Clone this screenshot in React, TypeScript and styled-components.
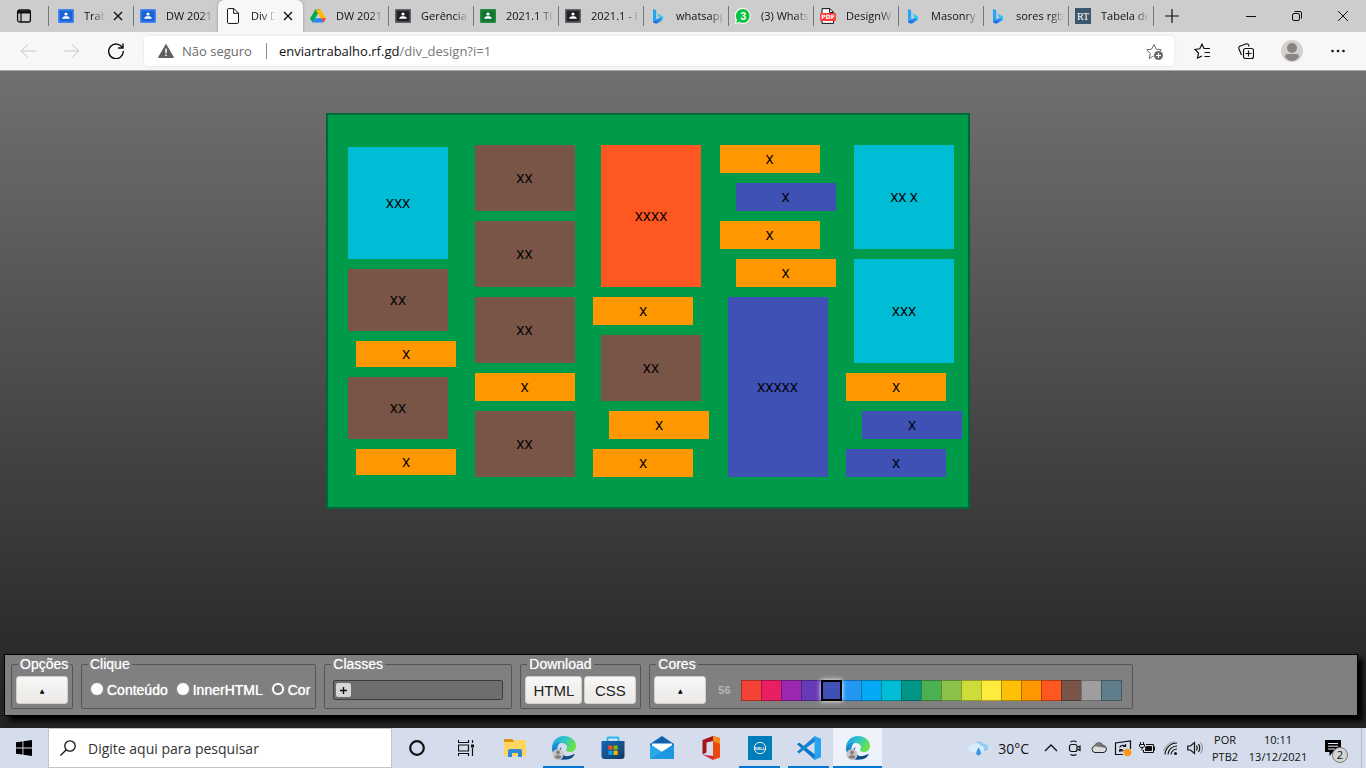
import React, { ReactNode } from 'react';
import styled, { createGlobalStyle, css } from 'styled-components';

const ui = '"Open Sans", "Noto Sans", sans-serif';
const arial = '"Liberation Sans", Arial, sans-serif';

const GlobalStyle = createGlobalStyle`
  *, *::before, *::after { box-sizing: border-box; }
  body { margin: 0; font-family: ${ui}; font-size: 12px; color: #111; }
  button { font: inherit; color: inherit; padding: 0; margin: 0; border: 0; background: none; }
  svg { display: block; flex: none; }
`;

const Screen = styled.div`
  display: flex;
  flex-direction: column;
  min-height: 100vh;
`;

/* ---------- browser window ---------- */

const TabStrip = styled.header`
  display: flex;
  height: 32px;
  background: #cdcdcd;
`;

const TabActions = styled.button`
  display: flex;
  align-items: center;
  justify-content: center;
  width: 48px;
  height: 32px;
`;

const Tabs = styled.nav`
  display: flex;
  min-width: 0;
`;

const Tab = styled.div<{ $active?: boolean; $line?: boolean; $first?: boolean }>`
  position: relative;
  display: flex;
  align-items: center;
  width: 85px;
  min-width: 0;
  height: 32px;
  padding: 0 4px 0 ${(p) => (p.$first ? 10 : 7)}px;
  ${(p) =>
    p.$active &&
    css`
      background: #f7f7f7;
      border-radius: 6px 6px 0 0;
      box-shadow: 0 0 3px rgba(0, 0, 0, 0.3);
      clip-path: inset(0 -3px 0 -3px);
    `}
  ${(p) =>
    p.$line &&
    css`
      &::before {
        content: '';
        position: absolute;
        left: 0;
        top: 6px;
        height: 20px;
        border-left: 1px solid #767676;
      }
    `}
`;

const TabTitle = styled.a`
  flex: 1;
  min-width: 0;
  margin-left: 10px;
  overflow: hidden;
  white-space: nowrap;
  color: #111;
  text-decoration: none;
  font-size: 11px;
  line-height: 16px;
  mask-image: linear-gradient(to left, transparent 0, #000 14px);
`;

const TabClose = styled.button`
  display: flex;
  align-items: center;
  justify-content: center;
  width: 16px;
  height: 16px;
  margin: 0 3px 0 4px;
`;

const NewTab = styled.button`
  position: relative;
  display: flex;
  align-items: center;
  justify-content: center;
  width: 38px;
  height: 32px;
  &::before {
    content: '';
    position: absolute;
    left: 0;
    top: 6px;
    height: 20px;
    border-left: 1px solid #767676;
  }
`;

const WindowButtons = styled.div`
  display: flex;
  margin-left: auto;
`;

const WindowButton = styled.button`
  display: flex;
  align-items: center;
  justify-content: center;
  width: 46px;
  height: 32px;
`;

const Toolbar = styled.div`
  display: flex;
  align-items: center;
  height: 39px;
  padding: 0 6px;
  background: #f7f7f7;
  border-bottom: 1px solid #a8a8a8;
`;

const ToolButton = styled.button<{ $wide?: boolean }>`
  display: flex;
  align-items: center;
  justify-content: center;
  width: ${(p) => (p.$wide ? 48 : 44)}px;
  height: 32px;
`;

const AddressBar = styled.form`
  display: flex;
  align-items: center;
  flex: 1;
  height: 30px;
  margin: 0 6px;
  padding: 0 11px 0 14px;
  background: #fff;
  border-radius: 4px;
  box-shadow: 0 0 3px rgba(0, 0, 0, 0.1);
  font-size: 13px;
`;

const SecurityNote = styled.button`
  display: flex;
  align-items: center;
  gap: 8px;
  padding-right: 14px;
  color: #6b6b6b;
  line-height: 16px;
  border-right: 1px solid #8a8a8a;
  white-space: nowrap;
`;

const Address = styled.a`
  flex: 1;
  margin-left: 12px;
  color: #777;
  text-decoration: none;
  white-space: nowrap;
`;

const Host = styled.span`
  color: #111;
`;

/* ---------- page ---------- */

const Page = styled.main`
  display: flex;
  flex-direction: column;
  flex: 1;
  background: linear-gradient(#707070, #222);
`;

const Stage = styled.section`
  display: flex;
  flex: 1;
  justify-content: center;
  align-items: flex-start;
  padding: 42px 70px 24px 0;
`;

const Board = styled.div`
  display: flex;
  align-items: center;
  justify-content: space-between;
  width: 644px;
  padding: 30px 6px 30px 12px;
  background: #009a4b;
  border: 2px solid #006837;
`;

const Column = styled.div`
  display: flex;
  flex-direction: column;
  gap: 10px;
  width: 116px;
`;

type Side = 'start' | 'center' | 'end';

const Block = styled.div<{ $h: number; $color: string; $side: Side }>`
  display: flex;
  align-items: center;
  justify-content: center;
  align-self: ${(p) => (p.$side === 'center' ? 'center' : `flex-${p.$side}`)};
  width: 100px;
  height: ${(p) => p.$h}px;
  background: ${(p) => p.$color};
  color: #000;
  font: 13px Roboto, sans-serif;
`;

const Panel = styled.section`
  display: flex;
  gap: 8px;
  margin: 0 8px 12px 4px;
  padding: 0 6px 6px;
  background: #808080;
  border: 1px solid #000;
  box-shadow: 5px 5px 5px #000;
  font-family: ${arial};
  font-size: 14px;
  color: #fff;
`;

const Group = styled.fieldset<{ $left?: number; $right?: number }>`
  min-width: 0;
  height: 53px;
  margin: 1px 0 0;
  padding: 0 ${(p) => p.$right ?? 4}px 0 ${(p) => p.$left ?? 4}px;
  border: 1px solid #555;
  border-radius: 2px;
`;

const Legend = styled.legend<{ $indent?: number }>`
  margin: 0 -4px 0 ${(p) => p.$indent ?? 2}px;
  padding: 0 2px;
  line-height: 16px;
  background: #808080;
  border-radius: 8px;
  text-shadow: 0 0 1px rgba(255, 255, 255, 0.6);
`;

const GroupRow = styled.div<{ $gap?: number }>`
  display: flex;
  align-items: center;
  gap: ${(p) => p.$gap ?? 2}px;
  height: 28px;
  margin-top: 4px;
`;

const Push = styled.button<{ $w: number; $small?: boolean }>`
  width: ${(p) => p.$w}px;
  height: 28px;
  background: linear-gradient(#f8f7f6, #ebe9e7);
  border: 1px solid #d3cfca;
  border-radius: 3px;
  color: ${(p) => (p.$small ? '#000' : '#222')};
  font-size: ${(p) => (p.$small ? 6 : 15)}px;
  font-family: ${(p) => (p.$small ? '"DejaVu Sans", sans-serif' : arial)};
`;

const Choice = styled.label`
  display: flex;
  align-items: center;
  gap: 4px;
  text-shadow: 0 0 1px #fff;
`;

const Radio = styled.input`
  appearance: none;
  width: 12px;
  height: 12px;
  margin: 0 0 2px;
  border-radius: 50%;
  background: #fff;
  box-shadow: 0 0 2px #aaa;
  &:checked {
    background: #777;
    border: 2px solid #fff;
  }
`;

const ClassList = styled.div`
  display: flex;
  align-items: center;
  width: 170px;
  height: 20px;
  padding: 0 2px;
  background: #6e6e6e;
  border: 1px solid #3c3c3c;
  border-radius: 2px;
`;

const AddClass = styled.button`
  display: flex;
  align-items: center;
  justify-content: center;
  width: 15px;
  height: 14px;
  background: #d6d6d6;
  border-radius: 2px;
`;

const Count = styled.output`
  width: 23px;
  margin-left: 12px;
  font-size: 11px;
  font-weight: bold;
  color: #b5b5b5;
`;

const Palette = styled.div`
  display: flex;
  padding-right: 7px;
`;

const Swatch = styled.button<{ $color: string; $on: boolean }>`
  width: 21px;
  height: 21px;
  margin-right: -1px;
  background: ${(p) => p.$color};
  border: 1px solid rgba(0, 0, 0, 0.3);
  ${(p) =>
    p.$on &&
    css`
      position: relative;
      border: 2px solid #000;
      box-shadow: 0 0 5px #fff;
    `}
`;

/* ---------- taskbar ---------- */

const Taskbar = styled.footer`
  display: flex;
  height: 40px;
  background: #d5dceb;
`;

const StartButton = styled.button`
  display: flex;
  align-items: center;
  justify-content: center;
  width: 48px;
`;

const SearchBox = styled.label`
  display: flex;
  align-items: center;
  gap: 12px;
  width: 344px;
  padding-left: 11px;
  background: #fff;
  border: 1px solid #c4c4c4;
`;

const SearchInput = styled.input`
  flex: 1;
  min-width: 0;
  padding: 0;
  border: 0;
  outline: 0;
  font: 14px ${ui};
  &::placeholder {
    color: #333;
    opacity: 1;
  }
`;

const TaskButton = styled.button<{ $open?: boolean; $current?: boolean }>`
  position: relative;
  display: flex;
  align-items: center;
  justify-content: center;
  width: 49px;
  background: ${(p) => (p.$current ? '#edf1f9' : 'none')};
  &::after {
    content: '';
    position: absolute;
    bottom: 0;
    left: ${(p) => (p.$current ? 0 : 4)}px;
    right: ${(p) => (p.$current ? 0 : 4)}px;
    height: 2px;
    background: ${(p) => (p.$open || p.$current ? '#0078d7' : 'none')};
  }
`;

const Tray = styled.div`
  display: flex;
  align-items: center;
  margin-left: auto;
  padding-right: 4px;
`;

const Weather = styled.button`
  display: flex;
  align-items: center;
  gap: 10px;
  margin-right: 10px;
  font-size: 14px;
`;

const TrayButton = styled.button`
  display: flex;
  align-items: center;
  justify-content: center;
  width: 24px;
  height: 40px;
`;

const TrayText = styled.button<{ $w: number }>`
  width: ${(p) => p.$w}px;
  font-size: 11px;
  line-height: 17px;
  text-align: center;
`;

const Notices = styled.button`
  position: relative;
  width: 49px;
  height: 40px;
  padding-left: 12px;
  border-right: 1px solid #b4bac8;
`;

const Badge = styled.span`
  position: absolute;
  left: 19px;
  top: 19px;
  width: 16px;
  height: 16px;
  border: 1px solid #777;
  border-radius: 50%;
  background: #d4d4d4;
  font-size: 11px;
  line-height: 14px;
`;

/* ---------- icons ---------- */

const Classroom = ({ frame, fill }: { frame: string; fill: string }) => (
  <svg width="16" height="16" viewBox="0 0 16 16">
    <rect y="1" width="16" height="14" rx="1" fill={frame} />
    <rect x="1.6" y="2.6" width="12.8" height="10.8" fill={fill} />
    <circle cx="8" cy="6" r="1.6" fill="#fff" />
    <path d="M4.200 10.800c0-2 2-2.600 3.800-2.600s3.800.6 3.800 2.600z" fill="#fff" />
  </svg>
);

const DocIcon = () => (
  <svg width="16" height="16" viewBox="0 0 16 16" fill="#fff" stroke="#111">
    <path d="M3.5.6H9l4.500 4.500v9.300q0 1-1 1H3.500q-1 0-1-1V1.600q0-1 1-1z" />
    <path d="M8.600.8v4.500h4.700" fill="none" />
  </svg>
);

const DriveIcon = () => (
  <svg width="16" height="16" viewBox="0 0 16 16">
    <path d="M5.400 1.500h5L8 5.600z" fill="#188038" />
    <path d="M5.400 1.500 0 10.500l2.500 4L8 5.600z" fill="#00ac47" />
    <path d="M10.500 1.500H5.600L10.800 10.500H16z" fill="#ffba00" />
    <path d="M2.500 14.500 5 10.300h6l2.500 4.200z" fill="#2684fc" />
    <path d="M10.900 10.300H16l-2.500 4.200z" fill="#ea4335" />
  </svg>
);

const BingIcon = () => (
  <svg width="16" height="16" viewBox="0 0 16 16">
    <defs>
      <linearGradient id="bingBody" x1="0" y1="1" x2="1" y2="0">
        <stop offset="0" stopColor="#1b54e8" />
        <stop offset="1" stopColor="#2fc2f4" />
      </linearGradient>
    </defs>
    <path d="M3 1l3.200 1.200v9.300L3 14z" fill="#24a5f5" />
    <path d="M3 13.500 12.500 8q1.500 3-1 4.800L7 15.500q-3.500 0-4-2z" fill="url(#bingBody)" />
    <path d="M7.300 5.600 11 7.300q2.300 1 2 3.500l-4-1.400z" fill="#35c6f5" />
  </svg>
);

const WhatsIcon = () => (
  <svg width="16" height="16" viewBox="0 0 16 16">
    <path d="M0 16 .8 12A8 8 0 1 1 4 15z" fill="#fff" />
    <path d="M1.300 14.700 2 11.800a6.900 6.900 0 1 1 2.400 2.200z" fill="#0cc143" />
    <text x="8.200" y="12" fontSize="10" fontWeight="700" textAnchor="middle" fill="#fff" fontFamily="Liberation Sans, sans-serif">3</text>
  </svg>
);

const PdfIcon = () => (
  <svg width="16" height="16" viewBox="0 0 16 16">
    <path d="M2 .6h8l3.500 3.600v11.200H2z" fill="#fff" stroke="#111" />
    <path d="M9.600.8v3.700h3.600" fill="none" stroke="#111" />
    <rect y="5" width="16" height="8" rx="1" fill="#ff3b3b" />
    <text x="8" y="11.200" fontSize="6" fontWeight="700" textAnchor="middle" fill="#fff" fontFamily="DejaVu Sans, sans-serif">PDF</text>
  </svg>
);

const RtIcon = () => (
  <svg width="16" height="16" viewBox="0 0 16 16">
    <rect width="16" height="16" fill="#3d566e" />
    <text x="8" y="12" fontSize="10" textAnchor="middle" fill="#fff" fontFamily="Liberation Serif, serif">RT</text>
  </svg>
);

const Line = ({ size = 16, w = 1, color = '#111', children }: { size?: number; w?: number; color?: string; children: ReactNode }) => (
  <svg width={size} height={size} viewBox={`0 0 ${size} ${size}`} fill="none" stroke={color} strokeWidth={w}>
    {children}
  </svg>
);

const EdgeIcon = ({ id }: { id: string }) => (
  <svg width="26" height="26" viewBox="0 0 26 26">
    <defs>
      <linearGradient id={`${id}a`} x1="0" y1="0" x2="1" y2=".4">
        <stop offset="0" stopColor="#1f9fe0" />
        <stop offset=".5" stopColor="#2ec4d0" />
        <stop offset="1" stopColor="#6be34a" />
      </linearGradient>
      <linearGradient id={`${id}b`} x1="0" y1="0" x2="0" y2="1">
        <stop offset="0" stopColor="#1b9de2" />
        <stop offset="1" stopColor="#0b57a8" />
      </linearGradient>
    </defs>
    <path d="M1 13C1 6 6 1 13 1s12 4.500 12 10c0 4-3 6-6 6-2.500 0-4-1-4-2s1-1.300 1-3c0-2-2.500-4-6-4-4 0-8 2-9 5z" fill={`url(#${id}a)`} />
    <path d="M1 13c.5-4 4.500-6 9-5.500C7 9 6 12 6.500 15c.7 4.500 4.500 8 9.500 8.500-2 1.200-3.500 1.500-5 1.300C5 24 1 19 1 13z" fill={`url(#${id}b)`} />
    <path d="M10.500 12c-2.500 5 1.500 10 7 9 3-.4 4.500-1.700 5.500-2 .6 0 .8.500.3 1.200C20 25 14 26 10 22.500c-3-3-3-8 .5-10.500z" fill="#114a8b" />
    <circle cx="7" cy="19.500" r="5.500" fill="#c9c7c5" />
    <circle cx="7" cy="17.600" r="2" fill="#85807d" />
    <path d="M3.500 22.500c0-3.400 7-3.400 7 0q-3.500 2.500-7 0z" fill="#85807d" />
  </svg>
);

const FolderIcon = () => (
  <svg width="22" height="20" viewBox="0 0 22 20">
    <path d="M0 1h8l2 2v5H0z" fill="#d9960a" />
    <path d="M0 4h9l2-2h11v16H0z" fill="#ffd562" />
    <path d="M4 19v-6q0-2 2-2h10q2 0 2 2v6h-4v-4H8v4z" fill="#2f8ad8" />
  </svg>
);

const StoreIcon = () => (
  <svg width="24" height="24" viewBox="0 0 24 24">
    <defs>
      <linearGradient id="store" x1="0" y1="0" x2="1" y2="1">
        <stop offset="0" stopColor="#1268b8" />
        <stop offset="1" stopColor="#173a63" />
      </linearGradient>
    </defs>
    <path d="M6.500 7V2.500q0-1 1-1h9q1 0 1 1V7" fill="none" stroke="#27b8ee" strokeWidth="1.800" />
    <path d="M.5 5h23v15q0 3-3 3h-17q-3 0-3-3z" fill="url(#store)" />
    <path d="M7.300 9.500h4.200v4.200H7.300z" fill="#f25022" />
    <path d="M12.500 9.500h4.200v4.200h-4.200z" fill="#7fba00" />
    <path d="M7.300 14.700h4.200v4.200H7.300z" fill="#00a4ef" />
    <path d="M12.500 14.700h4.200v4.200h-4.200z" fill="#ffb900" />
  </svg>
);

const MailIcon = () => (
  <svg width="24" height="24" viewBox="0 0 24 24">
    <path d="M0 8 12 0l12 8v4H0z" fill="#0f60ad" />
    <path d="M2 7.500h20V13l-10 5-10-5z" fill="#fff" />
    <path d="M0 8l12 8 12-8v15H0z" fill="#2aa9ea" />
    <path d="M24 8v15H0z" fill="#1b8fdc" opacity=".7" />
  </svg>
);

const OfficeIcon = () => (
  <svg width="20" height="24" viewBox="0 0 20 24">
    <path d="M12 0 1.500 4v14.500l4-2V6.500L12 5z" fill="#a4141c" />
    <path d="M12 0l7 2v19.500L12 24z" fill="#e84b0c" />
    <path d="M12 0l7 2v6l-7-3z" fill="#f78d1e" />
    <path d="M1.500 18.500 12 24v-4z" fill="#d6294a" />
  </svg>
);

const DellIcon = () => (
  <svg width="24" height="24" viewBox="0 0 24 24">
    <rect width="24" height="24" fill="#007db8" />
    <circle cx="12" cy="12" r="5.700" fill="none" stroke="#e6f3fa" />
    <text x="12" y="13.500" fontSize="4" fontWeight="700" textAnchor="middle" fill="#fff" fontFamily="Liberation Sans, sans-serif">DELL</text>
  </svg>
);

const CodeIcon = () => (
  <svg width="24" height="24" viewBox="0 0 24 24">
    <path d="M0 8.300 2 6.600 18 18.500V24z" fill="#0b76c4" />
    <path d="M0 15.700 2 17.400 18 5.500V0z" fill="#1584cf" />
    <path d="M17.500 0 24 2.800v18.400L17.500 24z" fill="#27a5f2" />
  </svg>
);

/* ---------- data ---------- */

const blueRoom = <Classroom frame="#4285f4" fill="#1a62d0" />;
const darkRoom = <Classroom frame="#5f6368" fill="#202124" />;

const tabs: { title: string; icon: ReactNode; active?: boolean; closable?: boolean }[] = [
  { title: 'Trab', icon: blueRoom, closable: true },
  { title: 'DW 2021', icon: blueRoom },
  { title: 'Div D', icon: <DocIcon />, active: true, closable: true },
  { title: 'DW 2021', icon: <DriveIcon /> },
  { title: 'Gerência', icon: darkRoom },
  { title: '2021.1 TC', icon: <Classroom frame="#1e8e3e" fill="#137333" /> },
  { title: '2021.1 - B', icon: darkRoom },
  { title: 'whatsapp', icon: <BingIcon /> },
  { title: '(3) Whats', icon: <WhatsIcon /> },
  { title: 'DesignW', icon: <PdfIcon /> },
  { title: 'Masonry', icon: <BingIcon /> },
  { title: 'sores rgb', icon: <BingIcon /> },
  { title: 'Tabela de', icon: <RtIcon /> },
];

const cyan = '#00bcd4';
const brown = '#795548';
const orange = '#ff9800';
const red = '#ff5722';
const indigo = '#3f51b5';

const columns: [string, number, string, Side][][] = [
  [
    ['XXX', 112, cyan, 'center'],
    ['XX', 62, brown, 'center'],
    ['X', 26, orange, 'end'],
    ['XX', 62, brown, 'center'],
    ['X', 26, orange, 'end'],
  ],
  [
    ['XX', 66, brown, 'center'],
    ['XX', 66, brown, 'center'],
    ['XX', 66, brown, 'center'],
    ['X', 28, orange, 'center'],
    ['XX', 66, brown, 'center'],
  ],
  [
    ['XXXX', 142, red, 'center'],
    ['X', 28, orange, 'start'],
    ['XX', 66, brown, 'center'],
    ['X', 28, orange, 'end'],
    ['X', 28, orange, 'start'],
  ],
  [
    ['X', 28, orange, 'start'],
    ['X', 28, indigo, 'end'],
    ['X', 28, orange, 'start'],
    ['X', 28, orange, 'end'],
    ['XXXXX', 180, indigo, 'center'],
  ],
  [
    ['XX X', 104, cyan, 'center'],
    ['XXX', 104, cyan, 'center'],
    ['X', 28, orange, 'start'],
    ['X', 28, indigo, 'end'],
    ['X', 28, indigo, 'start'],
  ],
];

const palette = [
  '#f44336', '#e91e63', '#9c27b0', '#673ab7', '#3f51b5', '#2196f3', '#03a9f4', '#00bcd4', '#009688', '#4caf50',
  '#8bc34a', '#cddc39', '#ffeb3b', '#ffc107', '#ff9800', '#ff5722', '#795548', '#9e9e9e', '#607d8b',
];

/* ---------- sections ---------- */

const Browser = () => (
  <>
    <TabStrip>
      <TabActions aria-label="Guias">
        <Line w={1.3}>
          <rect x="1.600" y="2" width="12.800" height="12" rx="2" />
          <path d="M1.600 4h12.800" strokeWidth="3" />
          <path d="M5 4v10" />
        </Line>
      </TabActions>
      <Tabs>
        {tabs.map((t, i) => (
          <Tab key={i} $active={t.active} $first={i === 0} $line={!t.active && i !== 3}>
            {t.icon}
            <TabTitle href="#">{t.title}</TabTitle>
            {t.closable && (
              <TabClose aria-label="Fechar guia">
                <Line w={1.4}><path d="M4 4l8 8M12 4l-8 8" /></Line>
              </TabClose>
            )}
          </Tab>
        ))}
      </Tabs>
      <NewTab aria-label="Nova guia">
        <Line w={1.2}><path d="M8 1v14M1 8h14" /></Line>
      </NewTab>
      <WindowButtons>
        <WindowButton aria-label="Minimizar"><Line><path d="M3 8.500h10" /></Line></WindowButton>
        <WindowButton aria-label="Restaurar">
          <Line>
            <rect x="3.500" y="5.500" width="7" height="7" rx="1.500" />
            <path d="M5.500 3.500H11q1.500 0 1.500 1.500v5.500" />
          </Line>
        </WindowButton>
        <WindowButton aria-label="Fechar"><Line><path d="M3 3l10 10M13 3L3 13" /></Line></WindowButton>
      </WindowButtons>
    </TabStrip>
    <Toolbar>
      <ToolButton aria-label="Voltar"><Line color="#c8c8c8"><path d="M16 8H1M8 1.500 1 8l7 6.500" /></Line></ToolButton>
      <ToolButton aria-label="Avançar"><Line color="#c8c8c8"><path d="M0 8h15M8 1.500 15 8l-7 6.500" /></Line></ToolButton>
      <ToolButton aria-label="Atualizar">
        <Line w={1.4}><path d="M14.500 5A7.300 7.300 0 1 0 15.300 8M15 .5V5h-5" /></Line>
      </ToolButton>
      <AddressBar>
        <SecurityNote type="button">
          <svg width="16" height="16" viewBox="0 0 16 16">
            <path d="M8 1.500 15.500 14.500H.5z" fill="#5f5f5f" stroke="#5f5f5f" strokeLinejoin="round" />
            <path d="M8 5.500v4.800M8 11.500v1.600" stroke="#fff" strokeWidth="1.500" />
          </svg>
          Não seguro
        </SecurityNote>
        <Address href="#"><Host>enviartrabalho.rf.gd</Host>/div_design?i=1</Address>
        <svg width="17" height="17" viewBox="0 0 17 17" fill="none" stroke="#6a6a6a">
          <path d="M7.500 13 3.200 15.500l1-5L.8 6.800l4.700-.6L8 1.500l2.300 4.700 5 .6-1.500 1.400" />
          <circle cx="12.500" cy="12.500" r="4.500" fill="#6a6a6a" stroke="none" />
          <path d="M12.500 10v5M10 12.500h5" stroke="#fff" />
        </svg>
      </AddressBar>
      <ToolButton aria-label="Favoritos">
        <Line w={1.2}><path d="M8 13l-4.400 2 .9-5L1 6.500l4.800-.7L8 1.200l2 4.300h6M10.500 9.500H16M10.500 13.500H16" /></Line>
      </ToolButton>
      <ToolButton aria-label="Coleções">
        <Line w={1.2}>
          <rect x="5.500" y="5.500" width="10" height="10" rx="2" />
          <path d="M10.500 7.500v6M7.500 10.500h6M3.500 12 .8 5.500Q.3 4 1.800 3.200L8.500.8Q10 .5 10.600 2l.5 1.500" />
        </Line>
      </ToolButton>
      <ToolButton $wide aria-label="Perfil">
        <svg width="22" height="22" viewBox="0 0 22 22">
          <circle cx="11" cy="11" r="11" fill="#d2d0ce" />
          <circle cx="11" cy="8" r="5" fill="#8a8583" />
          <path d="M4 17q0-3 3-3h8q3 0 3 3-3 4-7 4t-7-4z" fill="#8a8583" />
        </svg>
      </ToolButton>
      <ToolButton aria-label="Mais">
        <svg width="16" height="16" viewBox="0 0 16 16" fill="#111">
          <circle cx="2.500" cy="8" r="1.300" /><circle cx="8" cy="8" r="1.300" /><circle cx="13.500" cy="8" r="1.300" />
        </svg>
      </ToolButton>
    </Toolbar>
  </>
);

const ControlPanel = () => (
  <Panel>
    <Group>
      <Legend>Opções</Legend>
      <GroupRow><Push $w={52} $small>▲</Push></GroupRow>
    </Group>
    <Group $left={9} $right={5}>
      <Legend $indent={-3}>Clique</Legend>
      <GroupRow $gap={9}>
        <Choice><Radio type="radio" name="clique" />Conteúdo</Choice>
        <Choice><Radio type="radio" name="clique" />InnerHTML</Choice>
        <Choice><Radio type="radio" name="clique" defaultChecked />Cor</Choice>
      </GroupRow>
    </Group>
    <Group $left={8} $right={8}>
      <Legend $indent={-2}>Classes</Legend>
      <GroupRow>
        <ClassList>
          <AddClass aria-label="Adicionar classe">
            <Line size={7} w={1.4}><path d="M3.500 0v7M0 3.500h7" /></Line>
          </AddClass>
        </ClassList>
      </GroupRow>
    </Group>
    <Group>
      <Legend>Download</Legend>
      <GroupRow>
        <Push $w={57}>HTML</Push>
        <Push $w={52}>CSS</Push>
      </GroupRow>
    </Group>
    <Group>
      <Legend>Cores</Legend>
      <GroupRow $gap={0}>
        <Push $w={52} $small>▲</Push>
        <Count>56</Count>
        <Palette>
          {palette.map((c, i) => (
            <Swatch key={c} $color={c} $on={i === 4} aria-label={c} />
          ))}
        </Palette>
      </GroupRow>
    </Group>
  </Panel>
);

const WindowsBar = () => (
  <Taskbar>
    <StartButton aria-label="Iniciar">
      <svg width="16" height="16" viewBox="0 0 16 16">
        <path d="M0 2.300 6.500 1.400v6.100H0zM7.400 1.200 16 0v7.500H7.400zM0 8.400h6.500v6.200L0 13.700zM7.400 8.400H16V16l-8.600-1.200z" />
      </svg>
    </StartButton>
    <SearchBox>
      <Line w={1.3}><circle cx="10" cy="6" r="5.200" /><path d="M6.300 9.700.5 15.500" /></Line>
      <SearchInput type="text" aria-label="Pesquisar" placeholder="Digite aqui para pesquisar" />
    </SearchBox>
    <TaskButton aria-label="Cortana"><Line w={2.2}><circle cx="8" cy="8" r="6.800" /></Line></TaskButton>
    <TaskButton aria-label="Visão de tarefas">
      <Line w={1.200}>
        <path d="M.5 0v2.500h10V0M.5 16v-2.500h10V16M.5 5h10v6H.5zM14.500 0v3M14.500 8v8" />
        <path d="M13 4.500h3v3h-3z" fill="#111" stroke="none" />
      </Line>
    </TaskButton>
    <TaskButton aria-label="Explorador"><FolderIcon /></TaskButton>
    <TaskButton $open aria-label="Edge"><EdgeIcon id="e1" /></TaskButton>
    <TaskButton aria-label="Loja"><StoreIcon /></TaskButton>
    <TaskButton aria-label="Email"><MailIcon /></TaskButton>
    <TaskButton aria-label="Office"><OfficeIcon /></TaskButton>
    <TaskButton $open aria-label="Dell"><DellIcon /></TaskButton>
    <TaskButton $open aria-label="Código"><CodeIcon /></TaskButton>
    <TaskButton $current aria-label="Edge, ativo"><EdgeIcon id="e2" /></TaskButton>
    <Tray>
      <Weather>
        <svg width="20" height="16" viewBox="0 0 20 16">
          <path d="M9 10a4 4 0 0 1-3-6.500 6 5 0 0 1 10 .5 4 3.500 0 0 1 .5 7z" fill="#93cbf5" />
          <path d="M4 12a3.500 3.500 0 0 1 0-7 5 4.500 0 0 1 9 1 3 3 0 0 1 0 6z" fill="#d9eefd" />
          <path d="M10.500 7.500q3 4 2.300 6-.7 2-2.300 2t-2.300-2q-.2-2 2.300-6z" fill="#3a95e4" />
        </svg>
        30°C
      </Weather>
      <TrayButton aria-label="Ícones ocultos"><Line w={1.4}><path d="M2 11l6-6 6 6" /></Line></TrayButton>
      <TrayButton aria-label="Reunião">
        <Line w={1.2}><rect x="2.500" y="4.500" width="7.500" height="7" rx="2" /><path d="M10.500 7.500 13 6v4.500L10.500 9M3.500 2q3-2 6 0M3.500 14.500q3 1.600 6 0" /></Line>
      </TrayButton>
      <TrayButton aria-label="OneDrive">
        <svg width="16" height="16" viewBox="0 0 16 16">
          <path d="M4 12.500a3.200 3.200 0 0 1-.5-6.300 4.500 4.500 0 0 1 8.500-.7 3.600 3.600 0 0 1 1 7z" fill="#ddd" stroke="#222" />
          <path d="M3.500 6.200a4.500 4.500 0 0 1 8.500-.7q2 .2 3 2.500L9 7z" fill="#777" />
        </svg>
      </TrayButton>
      <TrayButton aria-label="Atualização">
        <Line size={18} w={1.2}>
          <path d="M9 15.500H1.500V4L16.500 2v8M5.500 8.500q2.500-3.500 6-1M11.500 5v2.500H9M5.800 13v-2.500h2.700M6 10.800q1.500 1.700 3.500.7" />
          <circle cx="13.500" cy="13.500" r="3.800" fill="#ff9614" stroke="none" />
        </Line>
      </TrayButton>
      <TrayButton aria-label="Bateria">
        <Line>
          <path d="M7 4.500h7.500v8h-10V10" /><path d="M7 6.500h5.500v4h-6v-2zM15 7h1v3h-1z" fill="#111" />
          <path d="M1.500 2v3M4.500 2v3M3 7v3.500" /><path d="M.5 4.500h5v2l-1.500 1H2l-1.500-1z" />
        </Line>
      </TrayButton>
      <TrayButton aria-label="Rede">
        <Line w={1.100}><path d="M2 14.500A12 12 0 0 1 14 3M5 14.500A9 9 0 0 1 14 6M8 14.500A6 6 0 0 1 14 9" /><circle cx="12.500" cy="13.500" r="1.500" fill="#111" stroke="none" /><path d="M.5 11Q4 3 12 1.500" stroke="#999" /></Line>
      </TrayButton>
      <TrayButton aria-label="Som">
        <Line w={1.200}><path d="M.8 6h2.700L7.500 2.500v11L3.500 10H.8zM9.500 5.500q1.500 2.500 0 5M11.500 4q2.500 4 0 8" /><path d="M13.500 2.500q4 5.500 0 11" stroke="#999" /></Line>
      </TrayButton>
      <TrayText $w={36}>POR<br />PTB2</TrayText>
      <TrayText $w={70}>10:11<br />13/12/2021</TrayText>
      <Notices aria-label="Notificações">
        <svg width="16" height="16" viewBox="0 0 16 16">
          <path d="M0 0h16v12H8l-3.500 4v-4H0z" />
          <path d="M3 3.500h10M3 6.200h10M3 9h7" stroke="#e8ecf4" />
        </svg>
        <Badge>2</Badge>
      </Notices>
    </Tray>
  </Taskbar>
);

export default function App() {
  return (
    <Screen>
      <GlobalStyle />
      <Browser />
      <Page>
        <Stage>
          <Board>
            {columns.map((blocks, i) => (
              <Column key={i}>
                {blocks.map(([text, h, color, side], j) => (
                  <Block key={j} $h={h} $color={color} $side={side}>{text}</Block>
                ))}
              </Column>
            ))}
          </Board>
        </Stage>
        <ControlPanel />
      </Page>
      <WindowsBar />
    </Screen>
  );
}
